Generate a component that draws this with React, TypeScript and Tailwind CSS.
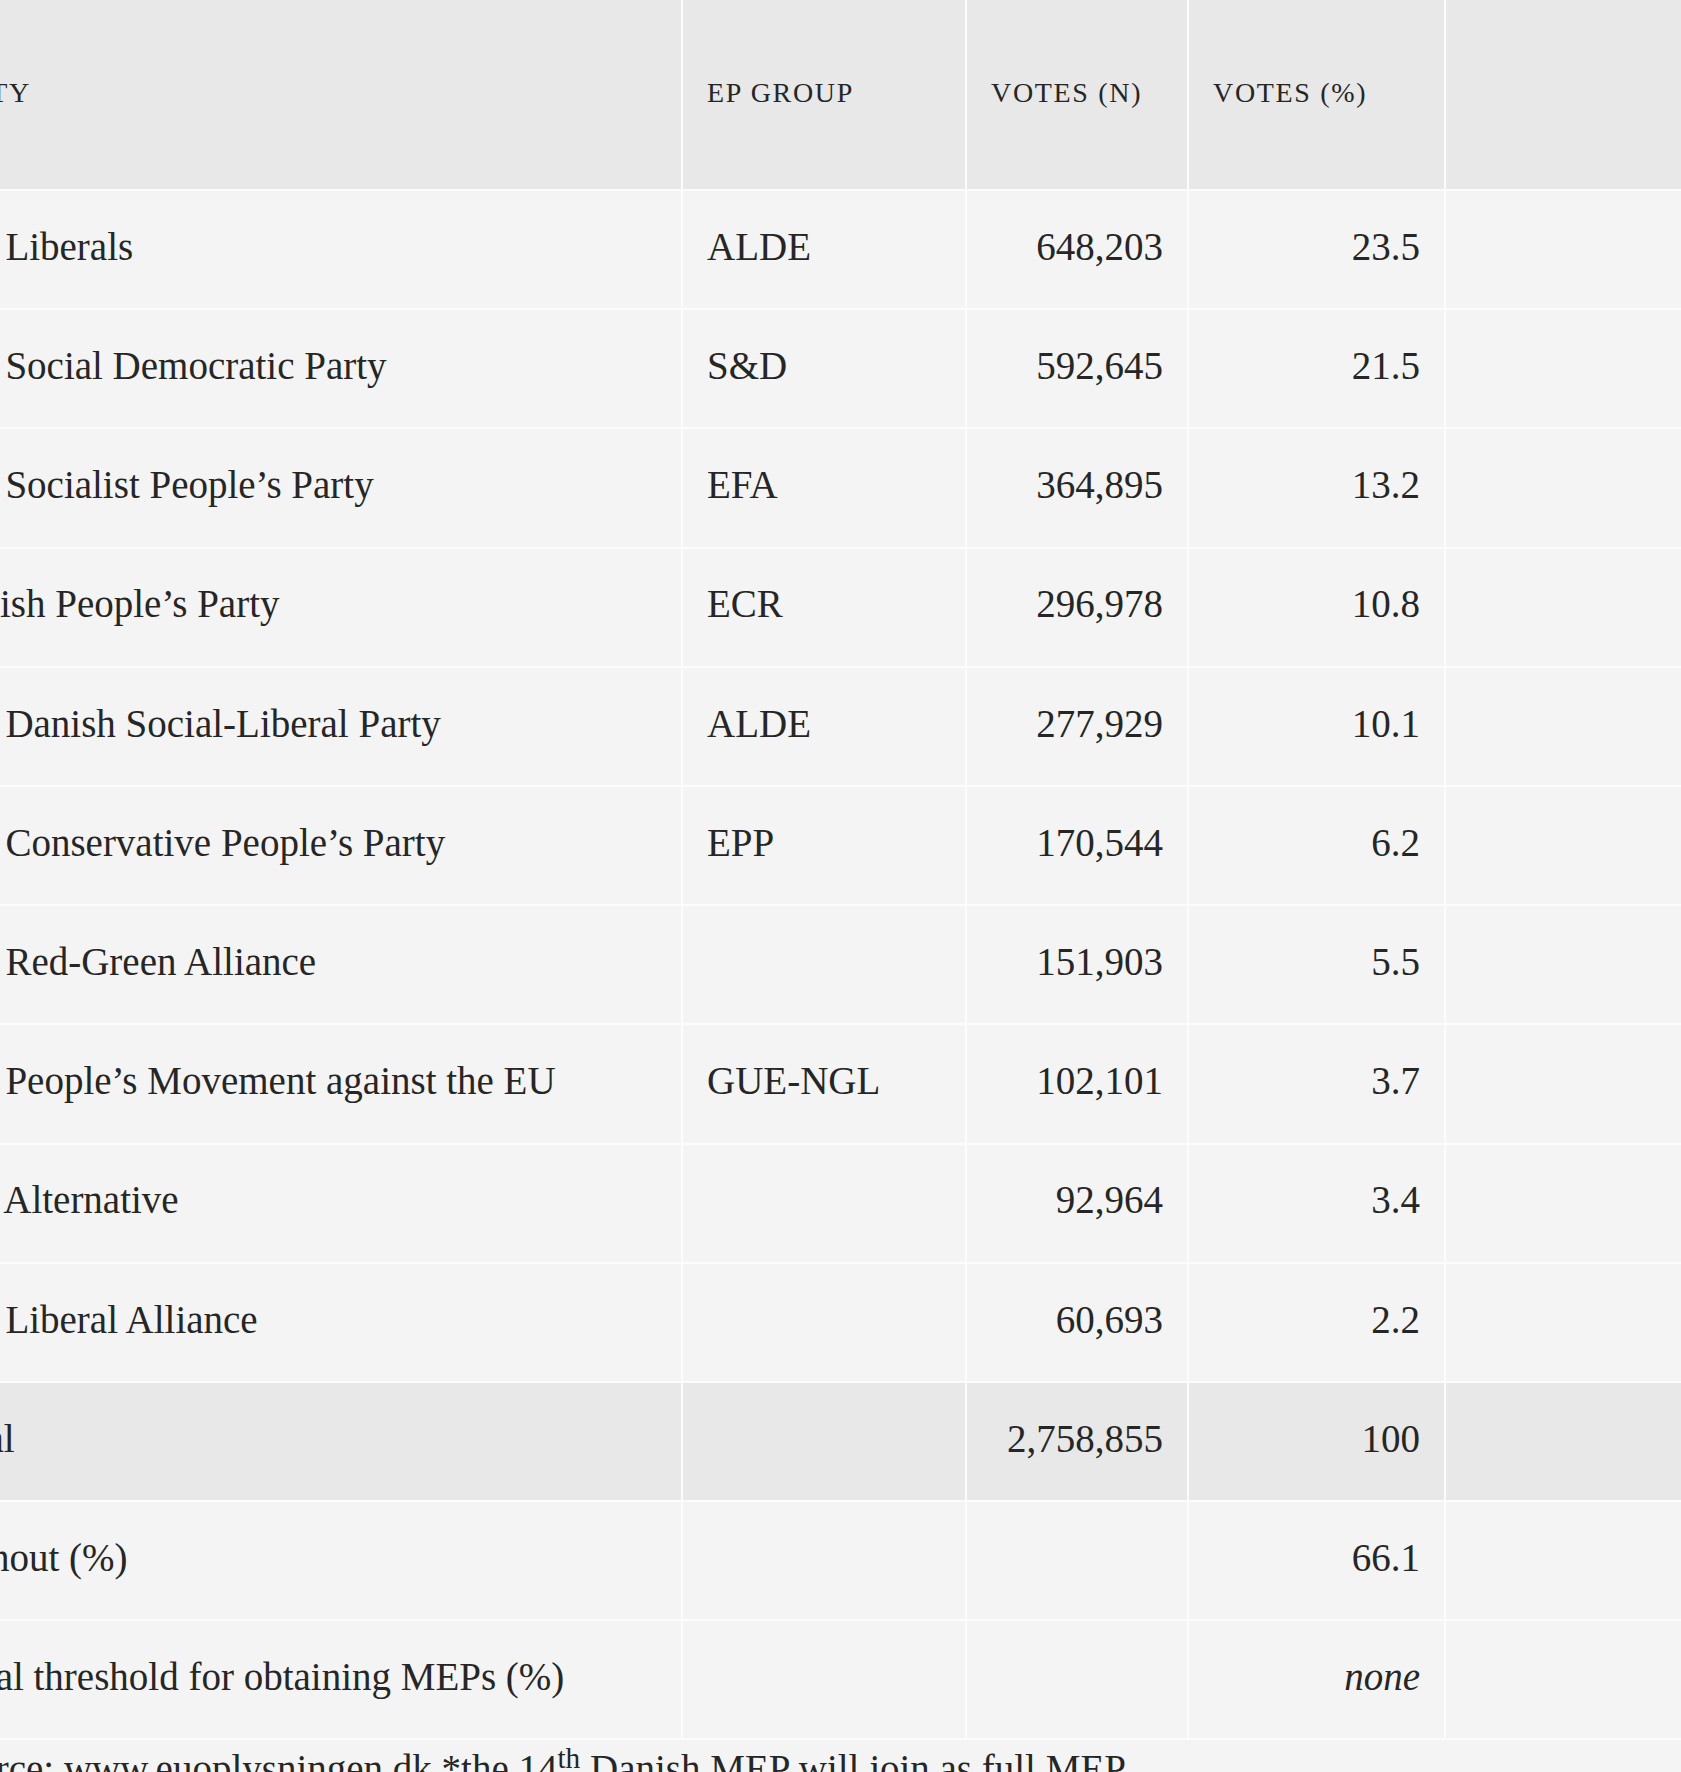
const rows = [
  { party: "The Liberals", group: "ALDE", votes: "648,203", pct: "23.5" },
  { party: "The Social Democratic Party", group: "S&D", votes: "592,645", pct: "21.5" },
  { party: "The Socialist People’s Party", group: "EFA", votes: "364,895", pct: "13.2" },
  { party: "Danish People’s Party", group: "ECR", votes: "296,978", pct: "10.8" },
  { party: "The Danish Social-Liberal Party", group: "ALDE", votes: "277,929", pct: "10.1" },
  { party: "The Conservative People’s Party", group: "EPP", votes: "170,544", pct: "6.2" },
  { party: "The Red-Green Alliance", group: "", votes: "151,903", pct: "5.5" },
  { party: "The People’s Movement against the EU", group: "GUE-NGL", votes: "102,101", pct: "3.7" },
  { party: "The Alternative", group: "", votes: "92,964", pct: "3.4" },
  { party: "The Liberal Alliance", group: "", votes: "60,693", pct: "2.2" },
];

const headCell =
  "h-[189px] bg-[#e8e8e8] flex items-center px-6 pb-1 text-[28px] uppercase tracking-[0.06em]";
const bodyCell = "h-[117.2px] flex items-center px-6 pb-[5px]";

function Row({
  party,
  group,
  votes,
  pct,
  total,
  italic,
}: {
  party: string;
  group: string;
  votes: string;
  pct: string;
  total?: boolean;
  italic?: boolean;
}) {
  const bg = total ? "bg-[#e8e8e8]" : "bg-[#f4f4f4]";
  return (
    <>
      <div className={`${bodyCell} ${bg}`}>{party}</div>
      <div className={`${bodyCell} ${bg}`}>{group}</div>
      <div className={`${bodyCell} ${bg} justify-end`}>{votes}</div>
      <div className={`${bodyCell} ${bg} justify-end ${italic ? "italic" : ""}`}>{pct}</div>
      <div className={`${bodyCell} ${bg}`}></div>
    </>
  );
}

export default function App() {
  return (
    <div
      className="h-screen w-full overflow-hidden bg-[#f4f4f4] text-[#262626]"
      style={{ fontFamily: '"Liberation Serif", "Times New Roman", serif' }}
    >
      {/* table is scrolled: first column starts left of the viewport */}
      <div className="ml-[-89px] w-max text-[39px]">
        <div className="grid grid-cols-[770px_282px_220px_255px_300px] gap-[2px] bg-[#fcfcfc] pb-[2px]">
          <div className={headCell}>Party</div>
          <div className={headCell}>EP Group</div>
          <div className={headCell}>Votes (n)</div>
          <div className={headCell}>Votes (%)</div>
          <div className={headCell}></div>

          {rows.map((r) => (
            <Row key={r.party} {...r} />
          ))}
          <Row party="Total" group="" votes="2,758,855" pct="100" total />
          <Row party="Turnout (%)" group="" votes="" pct="66.1" />
          <Row party="Legal threshold for obtaining MEPs (%)" group="" votes="" pct="none" italic />
        </div>
        <p className="px-6 leading-[1.5]">
          Source: www.euoplysningen.dk *the 14<sup>th</sup> Danish MEP will join as full MEP
          <br />
          once the United Kingdom leaves the EU.
        </p>
      </div>
    </div>
  );
}
